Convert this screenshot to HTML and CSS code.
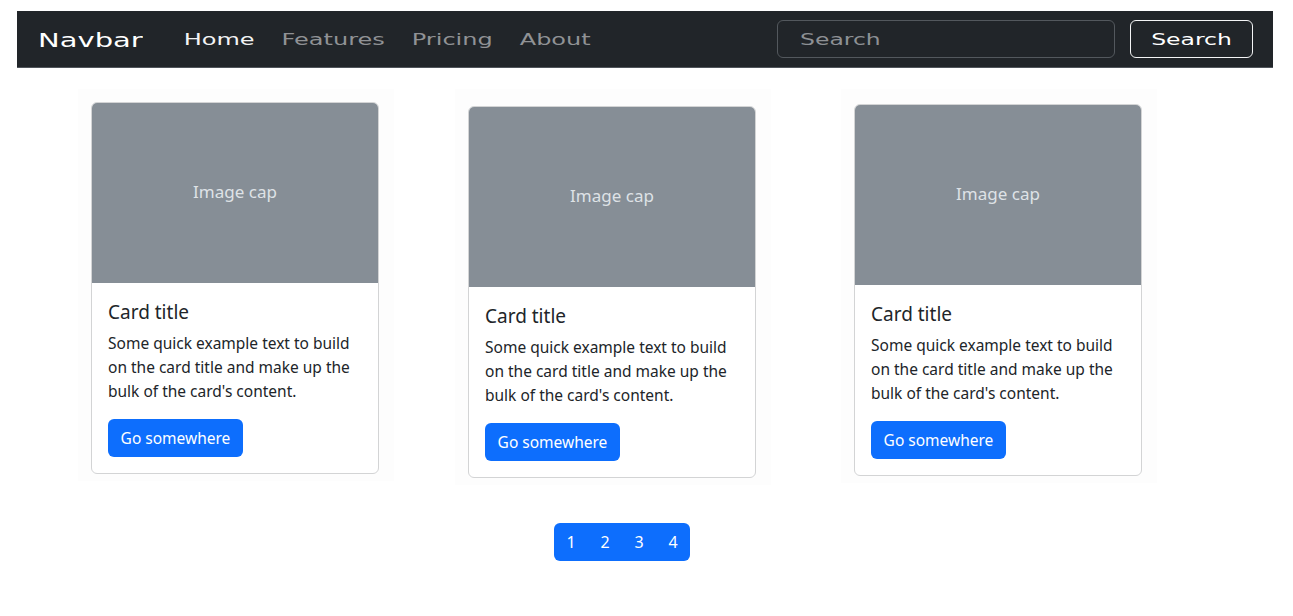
FILE: index.html
```html
<!DOCTYPE html>
<html lang="en">
<head>
<meta charset="utf-8">
<title>Navbar cards</title>
<link rel="stylesheet" href="styles.css">
</head>
<body>
<nav class="navbar">
  <a class="brand" href="#"><span class="wide">Navbar</span></a>
  <ul class="nav-links">
    <li><a class="nav-link active" href="#"><span class="wide">Home</span></a></li>
    <li><a class="nav-link" href="#"><span class="wide">Features</span></a></li>
    <li><a class="nav-link" href="#"><span class="wide">Pricing</span></a></li>
    <li><a class="nav-link" href="#"><span class="wide">About</span></a></li>
  </ul>
  <form class="search-form">
    <div class="search-input"><span class="wide">Search</span></div>
    <button class="search-btn" type="button"><span class="wide">Search</span></button>
  </form>
</nav>

<main class="content">
  <div class="cards">
    <div class="card-wrap wrap-1">
      <div class="card card-1">
        <div class="card-img">Image cap</div>
        <div class="card-body">
          <h5 class="card-title">Card title</h5>
          <p class="card-text">Some quick example text to build on the card title and make up the bulk of the card's content.</p>
          <a class="btn" href="#">Go somewhere</a>
        </div>
      </div>
    </div>
    <div class="card-wrap wrap-2">
      <div class="card card-2">
        <div class="card-img">Image cap</div>
        <div class="card-body">
          <h5 class="card-title">Card title</h5>
          <p class="card-text">Some quick example text to build on the card title and make up the bulk of the card's content.</p>
          <a class="btn" href="#">Go somewhere</a>
        </div>
      </div>
    </div>
    <div class="card-wrap wrap-3">
      <div class="card card-3">
        <div class="card-img">Image cap</div>
        <div class="card-body">
          <h5 class="card-title">Card title</h5>
          <p class="card-text">Some quick example text to build on the card title and make up the bulk of the card's content.</p>
          <a class="btn" href="#">Go somewhere</a>
        </div>
      </div>
    </div>
  </div>

  <ul class="pagination">
    <li><a href="#">1</a></li>
    <li><a href="#">2</a></li>
    <li><a href="#">3</a></li>
    <li><a href="#">4</a></li>
  </ul>
</main>
</body>
</html>
```

FILE: styles.css
```css
* { box-sizing: border-box; }

body {
  margin: 0;
  padding-top: 11px;
  background: #ffffff;
  font-family: "Noto Sans", "Noto Sans CJK KR", sans-serif;
  color: #212529;
}

a { text-decoration: none; }

.navbar {
  margin: 0 20px 0 17px;
  height: 57px;
  background: #212529;
  border-bottom: 1px solid #50555b;
  display: flex;
  align-items: center;
  padding: 2px 20px 0 21px;
  font-family: "DejaVu Sans", Verdana, sans-serif;
}

.wide {
  display: inline-block;
  transform: scaleY(0.667);
  transform-origin: center;
  line-height: 1;
  white-space: nowrap;
}

.brand {
  color: #ffffff;
  font-size: 29px;
  margin-right: 41px;
}
.brand .wide { transform: scaleY(0.66); }

.nav-links {
  list-style: none;
  margin: 0;
  padding: 0;
  display: flex;
  gap: 27px;
}

.nav-link {
  font-size: 24px;
  color: #909295;
}
.nav-link.active { color: #f2f3f4; }

.search-form {
  margin-left: auto;
  display: flex;
  gap: 15px;
  align-items: center;
  margin-top: -2px;
}

.search-input {
  width: 338px;
  height: 38px;
  border: 1px solid #53585d;
  border-radius: 6px;
  display: flex;
  align-items: center;
  padding: 2px 0 0 22px;
  font-size: 23.5px;
  color: #8d9094;
}

.search-btn {
  width: 123px;
  height: 38px;
  background: transparent;
  border: 1px solid #f4f5f6;
  border-radius: 6px;
  color: #ffffff;
  font-family: "DejaVu Sans", Verdana, sans-serif;
  font-size: 23.5px;
  padding: 2px 0 0;
  display: flex;
  align-items: center;
  justify-content: center;
}

.content { padding-top: 21px; }

.cards {
  display: flex;
  align-items: flex-start;
}

.card-wrap {
  background: #fdfdfd;
  padding: 13px 15px 7px 13px;
}
.wrap-1 { margin-left: 78px; }
.wrap-2 { margin-left: 61px; }
.wrap-3 { margin-left: 70px; }

.card {
  width: 288px;
  background: #ffffff;
  border: 1px solid #d3d4d5;
  border-radius: 6px;
  overflow: hidden;
}
.card-2 { margin-top: 4px; }
.card-3 { margin-top: 2px; }

.card-img {
  height: 180px;
  background: #868e96;
  color: #dee2e6;
  font-size: 17px;
  display: flex;
  align-items: center;
  justify-content: center;
  padding-bottom: 4px;
}

.card-body { padding: 17px 16px 16px; }

.card-title {
  margin: 0 0 7px;
  font-size: 19px;
  font-weight: 400;
  line-height: 24px;
}

.card-text {
  margin: 0 0 16px;
  font-size: 15.5px;
  line-height: 24px;
}

.btn {
  display: inline-flex;
  align-items: center;
  justify-content: center;
  width: 135px;
  height: 38px;
  background: #0d6efd;
  color: #ffffff;
  border-radius: 6px;
  font-size: 15.5px;
}

.pagination {
  list-style: none;
  margin: 38px 0 0 554px;
  padding: 0;
  display: flex;
  width: 136px;
  height: 38px;
  background: #0d6efd;
  border-radius: 6px;
}
.pagination li { width: 34px; }
.pagination a {
  display: flex;
  height: 38px;
  align-items: center;
  justify-content: center;
  color: #ffffff;
  font-size: 16px;
}
```
